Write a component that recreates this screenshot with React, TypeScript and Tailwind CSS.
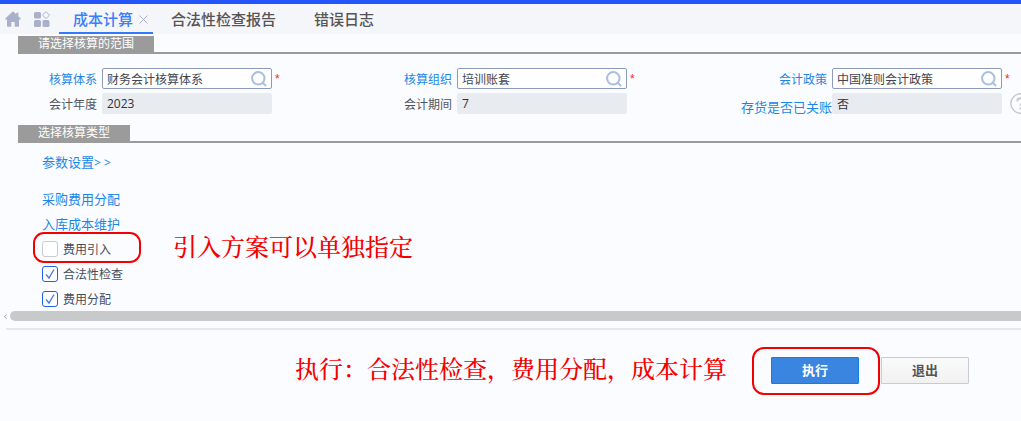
import { useState } from "react";

interface FieldProps {
  id: string;
  label: string;
  value: string;
}

function SearchIcon() {
  return (
    <svg className="size-4" viewBox="0 0 16 16" fill="none" stroke="#a9bfdd" strokeWidth="2">
      <circle cx="7.3" cy="7.3" r="6.2" />
      <path d="M11.6 11.6L15 15" />
    </svg>
  );
}

function SearchField({ id, label, value }: FieldProps) {
  return (
    <div className="flex items-center justify-end gap-[5px]">
      <label htmlFor={id} className="whitespace-nowrap pt-0.5 text-xs text-[#1c86e8]">
        {label}
      </label>
      <div className="relative flex h-[21px] w-[170px] items-center rounded-xs border border-[#8c9bbd] bg-white px-1">
        <input id={id} defaultValue={value} className="h-full w-full min-w-0 bg-transparent text-xs text-[#404550] outline-none" />
        <button type="button" aria-label={`搜索${label}`} className="shrink-0">
          <SearchIcon />
        </button>
        <span className="absolute left-full top-0.5 ml-1 font-['Liberation_Sans',sans-serif] text-xs text-[#f22]">*</span>
      </div>
    </div>
  );
}

function ReadonlyField({ id, label, value }: FieldProps) {
  return (
    <div className="flex items-center justify-end gap-[5px]">
      <label htmlFor={id} className="whitespace-nowrap pt-0.5 text-xs text-[#50555f]">
        {label}
      </label>
      <input id={id} readOnly value={value} className="h-[21px] w-[170px] rounded-xs bg-[#e8ebef] px-[5px] text-xs text-[#303238] outline-none" />
    </div>
  );
}

function SectionTitle({ title }: { title: string }) {
  return (
    <div className="ml-[18px] flex border-b-2 border-[#9b9b9b]">
      <h2 className="h-4 bg-[#9b9b9b] px-5 text-xs leading-4 text-white">{title}</h2>
    </div>
  );
}

interface CheckRowProps {
  id: string;
  label: string;
  defaultChecked?: boolean;
}

function CheckRow({ id, label, defaultChecked = false }: CheckRowProps) {
  const [checked, setChecked] = useState(defaultChecked);

  return (
    <div className="flex h-[25px] items-center gap-[5px]">
      <span className="relative size-4">
        <input
          id={id}
          type="checkbox"
          checked={checked}
          onChange={(e) => setChecked(e.target.checked)}
          className="block size-4 appearance-none rounded-[3px] border border-[#c9cbd2] bg-white checked:border-[#2260e8]"
        />
        {checked && (
          <svg className="pointer-events-none absolute inset-0 size-4" viewBox="0 0 16 16" fill="none" stroke="#3f78dc" strokeWidth="1.3">
            <path d="M4 8.3L7 12L12 3.5" />
          </svg>
        )}
      </span>
      <label htmlFor={id} className="whitespace-nowrap pt-0.5 text-xs text-[#484d57]">
        {label}
      </label>
    </div>
  );
}

export default function App() {
  return (
    <div className="min-h-screen overflow-hidden bg-[#fbfcff] font-['Open_Sans','Noto_Sans_CJK_SC',sans-serif]">
      <header className="flex h-[34px] items-stretch border-t-4 border-[#2355fb] bg-[#f5f6fa]">
        <button type="button" aria-label="首页" className="ml-[5px] w-4">
          <svg className="size-4" viewBox="0 0 16 16" fill="#a9b1ca">
            <path d="M8 0.3L0.2 7.5C-.1 8 .1 8.4 .7 8.4H2V15Q2 15.7 2.7 15.7H6.3V11H9.7V15.7H13.3Q14 15.7 14 15V8.4H15.3C15.9 8.4 16.1 8 15.8 7.5L13.4 5.2V1.8H11.2V3.2Z" />
          </svg>
        </button>
        <button type="button" aria-label="应用" className="ml-[13px] w-4">
          <svg className="size-4" viewBox="0 0 16 16" fill="#a9b1ca">
            <rect x="0" y="1" width="7" height="6.5" rx="1.5" />
            <rect x="0" y="9" width="7" height="7" rx="1.5" />
            <rect x="8.5" y="9" width="7" height="7" rx="1.5" />
            <path d="M12 .7L15.5 4.2L12 7.7L8.5 4.2Z" fill="none" stroke="#a9b1ca" />
          </svg>
        </button>
        <nav className="ml-[9px] flex text-[15px] font-medium text-[#555]">
          <div className="flex items-center border-b-2 border-[#2f7bfb] pl-[14px] pr-[5px]">
            <a href="#cost" className="pt-0.5 text-[#3b7ffb]">成本计算</a>
            <button type="button" aria-label="关闭" className="ml-[6px] pt-0.5">
              <svg className="size-[9px]" viewBox="0 0 9 9" stroke="#a9b1ca">
                <path d="M.5 .5L8.5 8.5M8.5 .5L.5 8.5" />
              </svg>
            </button>
          </div>
          <a href="#report" className="flex items-center border-b-2 border-transparent px-[18px] pt-0.5">合法性检查报告</a>
          <a href="#log" className="flex items-center border-b-2 border-transparent px-5 pt-0.5">错误日志</a>
        </nav>
      </header>

      <main className="pt-[2px]">
        <SectionTitle title="请选择核算的范围" />
        <div className="mt-[14px] grid grid-cols-[272fr_355fr_375fr_minmax(0,19fr)] gap-y-1">
          <SearchField id="system" label="核算体系" value="财务会计核算体系" />
          <SearchField id="org" label="核算组织" value="培训账套" />
          <SearchField id="policy" label="会计政策" value="中国准则会计政策" />
          <span />
          <ReadonlyField id="year" label="会计年度" value="2023" />
          <ReadonlyField id="period" label="会计期间" value="7" />
          <div className="flex h-[21px] justify-end">
            <label htmlFor="closed" className="whitespace-nowrap pt-1 text-[13px] leading-5 text-[#1c86e8]">
              存货是否已关账
            </label>
            <input id="closed" readOnly value="否" className="h-[21px] w-[170px] rounded-xs bg-[#e8ebef] px-[5px] text-xs text-[#303238] outline-none" />
          </div>
          <button type="button" aria-label="帮助" className="ml-2 size-[21px]">
            <svg className="size-[21px]" viewBox="0 0 21 21" fill="none" stroke="#c8c8c8">
              <circle cx="10.5" cy="10.5" r="9.7" strokeWidth="1.4" />
              <path d="M7.3 8.3C7.3 4.2 13.7 4.2 13.7 8.1C13.7 10.3 10.5 10.5 10.5 12.8" strokeWidth="2" />
              <path d="M10.5 14.5V16.5" strokeWidth="2" />
            </svg>
          </button>
        </div>

        <div className="mt-[11px]">
          <SectionTitle title="选择核算类型" />
        </div>
        <div className="ml-[42px] flex flex-col items-start text-[13px] leading-[25px] text-[#1c86e8]">
          <a href="#params" className="mb-3 mt-[7px]">
            参数设置<span className="text-xs">&gt; &gt;</span>
          </a>
          <a href="#purchase">采购费用分配</a>
          <a href="#inbound" className="-mb-px">入库成本维护</a>
          <div className="relative">
            <CheckRow id="import" label="费用引入" />
            <span className="pointer-events-none absolute -left-[9px] -top-1 h-[31px] w-[108px] rounded-[11px] border-2 border-[#f40000]" />
            <span className="pointer-events-none absolute -top-0.5 left-[131px] whitespace-nowrap font-['Liberation_Serif','Noto_Serif_CJK_SC','Noto_Sans_CJK_SC',serif] text-2xl leading-7 font-medium text-[#f40000]">
              引入方案可以单独指定
            </span>
          </div>
          <CheckRow id="legal" label="合法性检查" defaultChecked />
          <CheckRow id="allocate" label="费用分配" defaultChecked />
        </div>

        {/* horizontal scrollbar */}
        <div className="flex h-[10px] items-center">
          <svg className="ml-[3px] mr-[2px] size-[5px]" viewBox="0 0 5 6" fill="none" stroke="#999">
            <path d="M4 .5L1 3L4 5.5" />
          </svg>
          <div className="h-full flex-1 rounded-l-full bg-[#c8c9cb]" />
        </div>
      </main>

      <footer className="ml-[6px] mt-[7px] flex items-center justify-end border-t-2 border-[#e6e7e8] pb-9 pr-[52px] pt-[26px]">
        <p className="mr-11 whitespace-nowrap font-['Liberation_Serif','Noto_Serif_CJK_SC','Noto_Sans_CJK_SC',serif] text-2xl leading-7 font-medium text-[#f40000]">
          执行：合法性检查，费用分配，成本计算
        </p>
        <div className="relative mr-[22px]">
          <button type="button" className="block h-[27px] w-[88px] rounded-[1px] border border-[#127fdc] bg-[#3985e0] pt-0.5 text-[13px] font-bold text-white">
            执行
          </button>
          <span className="pointer-events-none absolute -bottom-[11px] -left-[19px] -right-[21px] -top-[10px] rounded-xl border-2 border-[#f40000]" />
        </div>
        <button type="button" className="h-[27px] w-[88px] rounded-[1px] border border-[#c9cbd2] bg-linear-to-b from-[#fafafa] to-[#f1f1f1] pt-0.5 text-[13px] font-bold text-[#555]">
          退出
        </button>
      </footer>
    </div>
  );
}
